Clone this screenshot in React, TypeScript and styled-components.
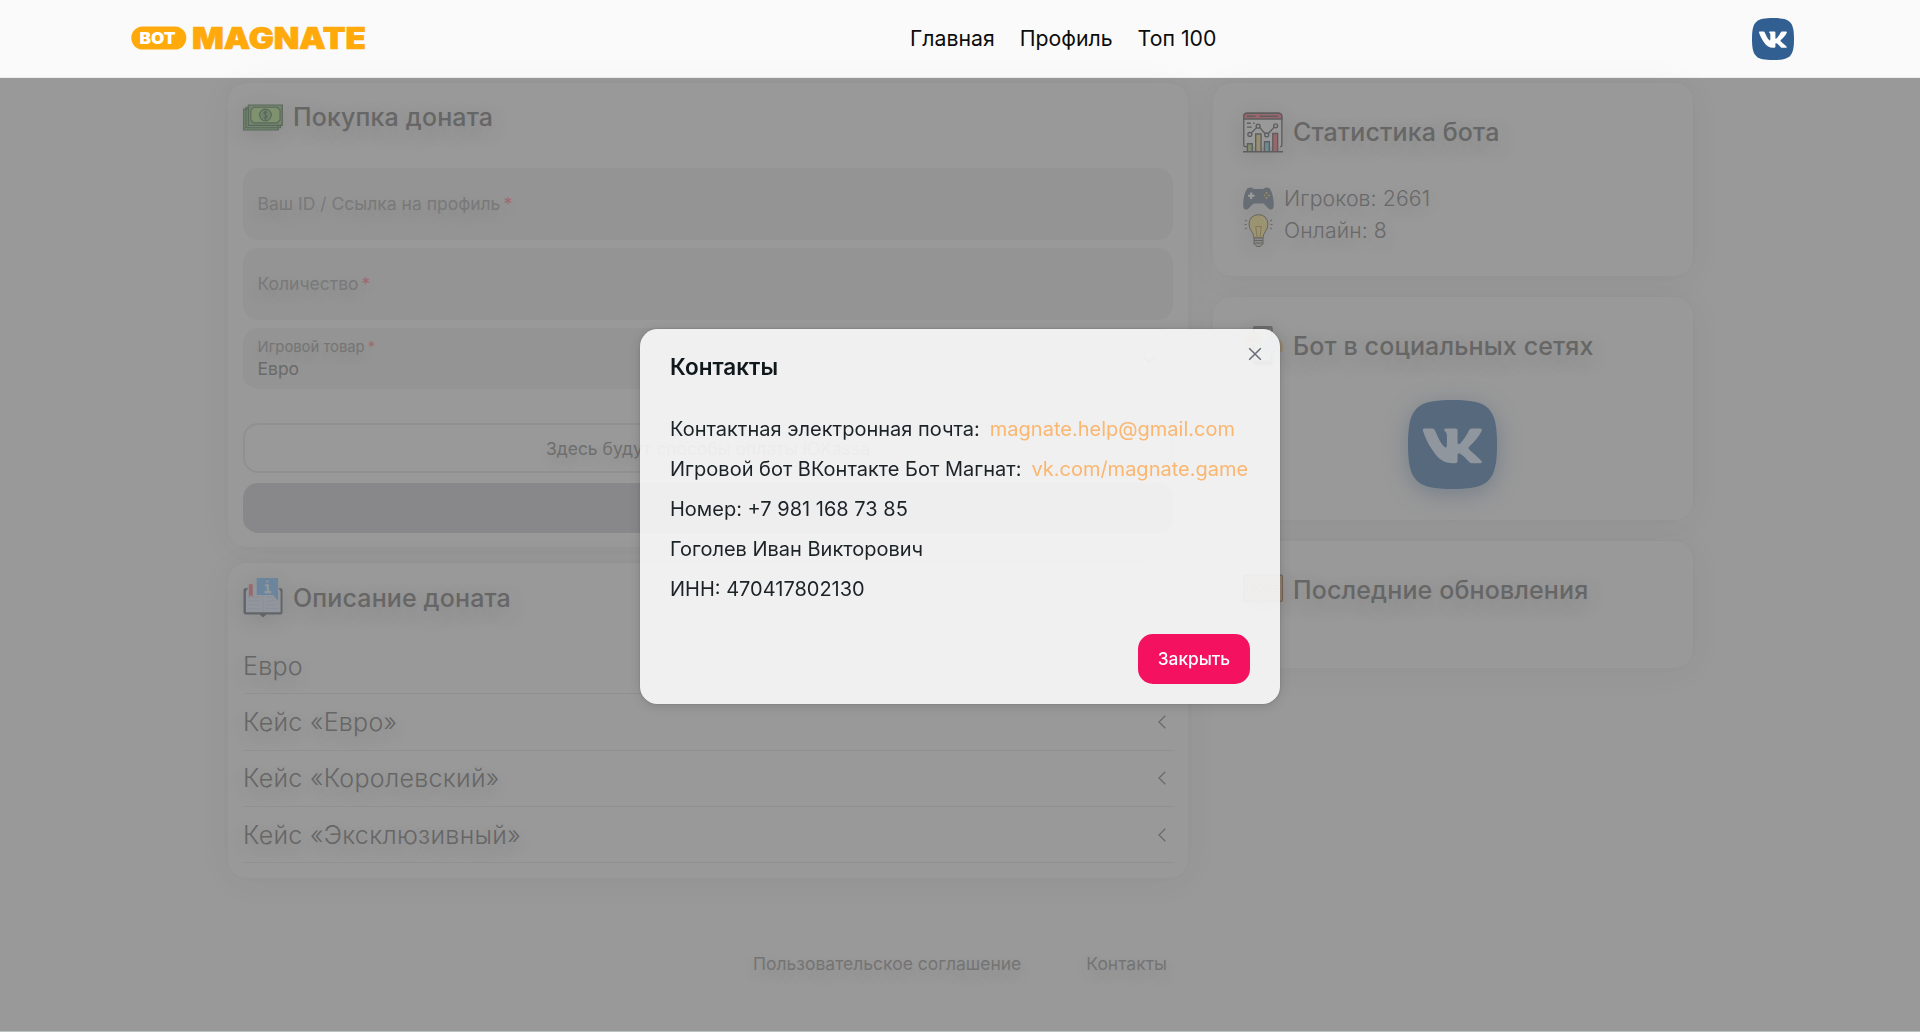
import React from "react";
import styled, { createGlobalStyle } from "styled-components";

const GlobalStyle = createGlobalStyle`
  *, *::before, *::after { box-sizing: border-box; }
  body {
    margin: 0;
    background: #999;
    font-family: Inter, "Noto Sans", sans-serif;
    overflow: hidden;
  }
  svg { display: block; flex: none; overflow: visible; }
`;

const Page = styled.div`
  display: flex;
  flex-direction: column;
  height: 1032px;
  background: #999;
  border-bottom: 1px solid #b9c3c4;
`;

const Header = styled.header`
  display: flex;
  align-items: center;
  flex: none;
  height: 78px;
  padding: 0 126px 0 131px;
  background: #fafafa;
  border-bottom: 1px solid #ececec;
`;

const Nav = styled.nav`
  display: flex;
  gap: 25px;
  margin: 0 auto 2px 538px;
`;

const NavLink = styled.a`
  color: #0c0c0c;
  font-size: 21.25px;
  font-weight: 400;
  line-height: 30px;
  white-space: nowrap;
`;

const Main = styled.main`
  display: flex;
  align-items: flex-start;
  gap: 25px;
  padding: 5px 0 0 228px;
`;

const Column = styled.div<{ $width: number; $gap: number }>`
  display: flex;
  flex-direction: column;
  gap: ${(p) => p.$gap}px;
  width: ${(p) => p.$width}px;
`;

const Card = styled.section<{ $pad: string }>`
  display: flex;
  flex-direction: column;
  padding: ${(p) => p.$pad};
  border-radius: 17.5px;
  background: #999;
  box-shadow: 0 0 19px rgba(0, 0, 0, 0.012), 0 3px 38px rgba(0, 0, 0, 0.04),
    0 0 1px rgba(0, 0, 0, 0.05);
`;

const CardTitle = styled.h2<{ $lift?: boolean }>`
  display: flex;
  align-items: center;
  gap: 10px;
  height: 39px;
  margin: 0 0 1px;
  padding-bottom: ${(p) => (p.$lift ? 1 : 0)}px;
  color: #666;
  font-size: 25px;
  font-weight: 500;
  letter-spacing: 0.13px;
  white-space: nowrap;
  text-shadow: 0 6px 25px rgba(0, 0, 0, 0.2);
`;

const Dim = styled.span`
  display: flex;
  justify-content: center;
  flex: none;
  opacity: 0.48;
  filter: brightness(0.64) drop-shadow(0 5px 12px rgba(0, 0, 0, 0.2));
`;

const Form = styled.div`
  display: flex;
  flex-direction: column;
  gap: 8px;
  margin-top: 30px;
`;

const Field = styled.div<{ $height: number }>`
  display: flex;
  align-items: center;
  justify-content: space-between;
  height: ${(p) => p.$height}px;
  padding: 0 17px 0 14.5px;
  border-radius: 15px;
  background: #949494;
`;

const FieldText = styled.div`
  display: flex;
  flex-direction: column;
`;

const Label = styled.label<{ $small?: boolean }>`
  color: ${(p) => (p.$small ? "#757575" : "#797979")};
  font-size: ${(p) => (p.$small ? 14.8 : 17.5)}px;
  line-height: ${(p) => (p.$small ? 20 : 24)}px;
  text-shadow: 0 6px 18px rgba(0, 0, 0, 0.12);
`;

const Star = styled.span`
  margin-left: 3px;
  color: #a2686f;
`;

const Value = styled.span`
  color: #6a6a6a;
  font-size: 17.5px;
  line-height: 24px;
`;

const PaymentHint = styled.div`
  display: flex;
  align-items: center;
  justify-content: center;
  height: 50px;
  margin-top: 34px;
  border: 2px solid #909090;
  border-radius: 15px;
  color: #6e6e6e;
  font-size: 17.5px;
  text-shadow: 0 6px 18px rgba(0, 0, 0, 0.12);
`;

const PayButton = styled.div`
  height: 50px;
  margin-top: 10px;
  border-radius: 15px;
  background: #88888a;
`;

const Accordion = styled.div`
  display: flex;
  flex-direction: column;
  margin-top: 20px;
`;

const AccordionRow = styled.div`
  display: flex;
  align-items: center;
  justify-content: space-between;
  height: 56.3px;
  padding-right: 7px;
  border-bottom: 1px solid #909090;
  color: #666;
  font-size: 25px;
  font-weight: 300;
  letter-spacing: 0.3px;
  text-shadow: 0 6px 20px rgba(0, 0, 0, 0.16);
`;

const Stats = styled.div`
  display: flex;
  flex-direction: column;
  margin-top: 29px;
`;

const StatRow = styled.div`
  display: flex;
  align-items: center;
  gap: 10px;
  height: 32px;
  color: #696969;
  font-size: 21.25px;
  font-weight: 300;
  letter-spacing: 0.1px;
  text-shadow: 0 6px 20px rgba(0, 0, 0, 0.16);
`;

const Social = styled.div`
  display: flex;
  justify-content: center;
  margin: 34px 1px 0 0;
  filter: drop-shadow(0 5px 12px rgba(50, 76, 110, 0.35));
`;

const Footer = styled.footer`
  display: flex;
  gap: 65px;
  padding: 74px 0 0 753px;
  color: #747474;
  font-size: 17.5px;
  line-height: 24px;
  white-space: nowrap;
  text-shadow: 0 6px 18px rgba(0, 0, 0, 0.14);
`;

const Overlay = styled.div`
  position: fixed;
  inset: 1px 0 0 0;
  display: flex;
  align-items: center;
  justify-content: center;
`;

const Dialog = styled.section`
  position: relative;
  display: flex;
  flex-direction: column;
  width: 640px;
  height: 375px;
  border-radius: 17.5px;
  background: rgba(249, 249, 249, 0.9);
  box-shadow: 0 0 6px rgba(0, 0, 0, 0.05), 0 2px 12px rgba(0, 0, 0, 0.13),
    0 0 1px rgba(0, 0, 0, 0.35);
`;

const DialogTitle = styled.h3`
  margin: 0;
  padding: 20px 30px;
  color: #11181c;
  font-size: 22.5px;
  font-weight: 600;
  line-height: 35px;
`;

const DialogBody = styled.div`
  display: flex;
  flex-direction: column;
  gap: 10px;
  padding: 10px 30px;
`;

const Line = styled.p`
  display: flex;
  gap: 10px;
  margin: 0;
  color: #1c2327;
  font-size: 20px;
  line-height: 30px;
  white-space: nowrap;
`;

const Mail = styled.a`
  color: #fbb66f;
`;

const DialogFooter = styled.div`
  display: flex;
  justify-content: flex-end;
  padding: 20px 30px;
`;

const CloseButton = styled.button`
  width: 112px;
  height: 50px;
  padding: 0 0 1px;
  border: 0;
  border-radius: 15px;
  background: #f41260;
  color: #fff;
  font-family: inherit;
  font-size: 17.3px;
  font-weight: 500;
`;

const CloseIcon = styled.button`
  position: absolute;
  top: 15px;
  right: 15px;
  display: grid;
  place-items: center;
  width: 20px;
  height: 20px;
  padding: 0;
  border: 0;
  background: none;
`;

const LogoBox = styled.div`
  display: flex;
  width: 241px;
  margin-bottom: 1px;
`;

const Logo = () => (
  <LogoBox>
    <svg width="241" height="30" viewBox="0 -3 241 30" fontFamily="Inter, sans-serif" fontWeight="900">
      <rect x="0.3" y="0.5" width="55" height="23" rx="11.5" fill="#ffa90a" />
      <text x="8.5" y="17.800" fontSize="15.5" fill="#fff" textLength="36" lengthAdjust="spacingAndGlyphs">BOT</text>
      <text x="61" y="22.5" fontSize="29.5" fill="#ffa90a" stroke="#ffa90a" strokeWidth="0.7" textLength="174" lengthAdjust="spacingAndGlyphs">MAGNATE</text>
    </svg>
  </LogoBox>
);

const VkIcon = ({ size, bg = "#315f92", fg = "#fff" }: { size: number; bg?: string; fg?: string }) => (
  <svg width={size} height={size} viewBox="0 0 100 100">
    <path d="M50 0C90 0 100 8 100 50S90 100 50 100 0 92 0 50 10 0 50 0Z" fill={bg} />
    <path d="M18 32H27.500Q29.500 32 30.500 34.500C34 43 38 51 42 53.500Q43.700 54 43.700 49V40Q43.700 36 41 34.500Q40 32 42.500 32H53.500Q55.700 32 55.700 34.500V48Q56 51 59 48.500C63 44 66.500 38.500 68.500 34Q69.500 32 71.500 32H81Q84 32 82.500 35.500C79.500 41.500 74 47.500 68.500 52.500Q67 54 69 56C74 60.500 79 64.500 82.500 68.500Q84 71 81 71H71.500Q70 71 68.500 69.500C65.500 66 61.500 61.500 58 60Q55.700 59.500 55.700 62V68.500Q55.700 71 53 71C42 72 34 66.500 28 57C23 50 19 42 16.800 34.500Q16 32 18 32Z" fill={fg} />
  </svg>
);

const MoneyIcon = () => (
  <svg width="40" height="27" viewBox="0 0 41 27" fill="#6fb060" stroke="#24522d" strokeWidth="1.2">
    <path d="M.7 5H36V26.300H.7ZM3 3H38.500V24H3Z" />
    <path d="M5.500.7H40.300V21.500H5.500Z" />
    <path d="M11 3H35L38 6V16L35 19H11L8 16V6Z" fill="#9bd665" />
    <circle cx="23" cy="11" r="6" />
    <path d="M25 8.500Q22 6.500 21.300 9.500L24.700 12Q24.500 15 21 13.500M23 6V16" fill="none" />
  </svg>
);

const BookIcon = () => (
  <svg width="40" height="41" viewBox="0 0 41 41">
    <path d="M2 11H39Q40.500 11 40.500 13V36Q40.500 38 38.500 38H24L20.500 41 17 38H3Q.5 38 .5 36V13Q.5 11 2 11Z" fill="#3c4856" />
    <path d="M3 14L8 8Q16 8 20.500 14 26 8 34 8L38.500 14V35.500H3Z" fill="#dbe8fb" />
    <path d="M20.500 14V35.500M5 20H17M5 24H17M5 28H17M5 32H17M24 20H34M24 24H34M24 28H34M24 32H36" stroke="#b9cfee" strokeWidth="1" />
    <path d="M6 7H10V20L8 18 6 20Z" fill="#f0535d" />
    <path d="M14 .5H36V24L31 18H14Z" fill="#5cb0fa" />
    <path d="M25 3V5M22.500 8H25.500V15M22 15H29" fill="none" stroke="#d6ebfc" strokeWidth="2.200" />
  </svg>
);

const ChartIcon = () => (
  <svg width="40" height="41" viewBox="0 0 41 41" fill="none" stroke="#302f35" strokeWidth="1.400">
    <path d="M4 35H3Q.8 35 .8 33V4Q.8.8 4 .8H36Q39.800.8 39.800 4V33Q39.800 35 38 35" fill="#f2f2f2" />
    <path d="M.8 6.700V4Q.8.8 4 .8H36Q39.800.8 39.800 4V6.700Z" fill="#ef5360" />
    <path d="M4 3.800H13M17 3.800H36M4 11H8M10.500 11H12M4 15H9" />
    <path d="M4.500 40V32H9.500V40" fill="#9cc763" />
    <path d="M13 40V22H18.500V40" fill="#ecd05f" />
    <path d="M22 40V30H27V40" fill="#58cbe4" />
    <path d="M30.500 40V21.500H35.500V40" fill="#ef4b5c" />
    <path d="M0 40.200H41M8.300 21L14 15.500M17.300 15.500L22.500 21.500M26 21.500L32 15" />
    <circle cx="7" cy="22.500" r="2" /><circle cx="15.500" cy="14" r="2" />
    <circle cx="24.300" cy="23" r="2" /><circle cx="33.500" cy="13.700" r="2" />
  </svg>
);

const GamepadIcon = () => (
  <svg width="31" height="23" viewBox="0 0 31 23">
    <path d="M5 1Q9-.5 11 2H20Q23-.5 26 1C29 3 31 12 30.800 19Q30 24 26 22L20.500 16.500H10.500L5 22Q.5 24 .2 19C0 12 2 3 5 1Z" fill="#4b6178" />
    <path d="M8.200 5.500V12M5 8.800H11.500" stroke="#fff" strokeWidth="2" />
    <path d="M23.500 5V7M23.500 10V12M21 8.500H22.500M25 8.500H27" stroke="#d9bd48" strokeWidth="1.700" />
  </svg>
);

const BulbIcon = () => (
  <svg width="31" height="33" viewBox="0 0 31 33" fill="none" stroke="#4b4634" strokeWidth="1">
    <path d="M11 24C11 18 6 16.500 6 10Q7 .7 15.500.7T25 10C25 16.500 20 18 20 24Z" fill="#fbe36d" />
    <path d="M11 24H20V30L17 32.500H14L11 30ZM11 26.500H20M11.500 29H19.500" fill="#c3c3ca" />
    <path d="M14 23L12.700 12.500H18.300L17 23" stroke="#b47d29" />
    <path d="M18.500 3.500Q22 5 22.500 9" stroke="#fffbe0" />
    <path d="M2 6L4 7M1.500 10.500H3.500M2 15L4 14M29 6L27 7M29.500 10.500H27.500M29 15L27 14" />
  </svg>
);

const SocialIcon = () => (
  <svg width="40" height="41" viewBox="0 0 41 41">
    <rect x="10" y="0.500" width="20.500" height="40" rx="2" fill="#5a5a64" />
    <rect x="12" y="4" width="16.500" height="32" fill="#d6e6f6" />
    <path d="M2 8H18V20H9L5 24V20H2Z" fill="#f5c67e" />
    <path d="M21 13H34Q39 14 40 21T35 29H21Z" fill="#b9d7ee" />
    <path d="M37 15Q41 21 38.500 27" stroke="#e2ad4e" strokeWidth="2.500" fill="none" />
    <path d="M7 12L10 16L14 12" stroke="#e06a6a" strokeWidth="2" fill="none" />
  </svg>
);

const UpdateIcon = () => (
  <svg width="40" height="31" viewBox="0 0 41 31">
    <rect x="0.700" y="0.700" width="39.600" height="27" rx="1.500" fill="#f5b67c" stroke="#744526" strokeWidth="1.400" />
    <text x="3" y="18" fontFamily="Inter, sans-serif" fontSize="9.500" fill="#86552f" textLength="35">UPDATE</text>
    <path d="M9 28H28V30.500H9Z" fill="#8fb6ae" />
  </svg>
);

const Chevron = ({ down }: { down?: boolean }) => (
  <svg width={down ? 14 : 8} height={down ? 8 : 14} viewBox={down ? "0 0 14 8" : "0 0 8 14"} fill="none" stroke="#6b6b6b" strokeWidth="1.300">
    <path d={down ? "M1 1L7 7L13 1" : "M7.300.7L1 7L7.300 13.300"} />
  </svg>
);

const cases = ["Евро", "Кейс «Евро»", "Кейс «Королевский»", "Кейс «Эксклюзивный»"];

export default function App() {
  return (
    <>
      <GlobalStyle />
      <Page>
        <Header>
          <Logo />
          <Nav>
            <NavLink>Главная</NavLink>
            <NavLink>Профиль</NavLink>
            <NavLink>Топ 100</NavLink>
          </Nav>
          <VkIcon size={42} />
        </Header>
        <Main>
          <Column $width={960} $gap={16}>
            <Card $pad="15px 15px 14px">
              <CardTitle $lift><Dim><MoneyIcon /></Dim>Покупка доната</CardTitle>
              <Form>
                <Field $height={72}><Label>Ваш ID / Ссылка на профиль<Star>*</Star></Label></Field>
                <Field $height={72}><Label>Количество<Star>*</Star></Label></Field>
                <Field $height={61}>
                  <FieldText>
                    <Label $small>Игровой товар<Star>*</Star></Label>
                    <Value>Евро</Value>
                  </FieldText>
                  <Chevron down />
                </Field>
              </Form>
              <PaymentHint>Здесь будут способы оплаты ЮKassa</PaymentHint>
              <PayButton />
            </Card>
            <Card $pad="15px">
              <CardTitle><Dim><BookIcon /></Dim>Описание доната</CardTitle>
              <Accordion>
                {cases.map((name) => (
                  <AccordionRow key={name}>{name}<Chevron /></AccordionRow>
                ))}
              </Accordion>
            </Card>
          </Column>
          <Column $width={480} $gap={21}>
            <Card $pad="30px">
              <CardTitle $lift><Dim><ChartIcon /></Dim>Статистика бота</CardTitle>
              <Stats>
                <StatRow><Dim><GamepadIcon /></Dim>Игроков: 2661</StatRow>
                <StatRow><Dim><BulbIcon /></Dim>Онлайн: 8</StatRow>
              </Stats>
            </Card>
            <Card $pad="29px 30px 31px">
              <CardTitle><Dim><SocialIcon /></Dim>Бот в социальных сетях</CardTitle>
              <Social><VkIcon size={89} bg="#56697d" fg="#8f969e" /></Social>
            </Card>
            <Card $pad="29px 30px 58px">
              <CardTitle><Dim><UpdateIcon /></Dim>Последние обновления</CardTitle>
            </Card>
          </Column>
        </Main>
        <Footer>
          <span>Пользовательское соглашение</span>
          <span>Контакты</span>
        </Footer>
      </Page>
      <Overlay>
        <Dialog>
          <DialogTitle>Контакты</DialogTitle>
          <DialogBody>
            <Line>Контактная электронная почта: <Mail>magnate.help@gmail.com</Mail></Line>
            <Line>Игровой бот ВКонтакте Бот Магнат: <Mail>vk.com/magnate.game</Mail></Line>
            <Line>Номер: +7 981 168 73 85</Line>
            <Line>Гоголев Иван Викторович</Line>
            <Line>ИНН: 470417802130</Line>
          </DialogBody>
          <DialogFooter><CloseButton>Закрыть</CloseButton></DialogFooter>
          <CloseIcon aria-label="Закрыть">
            <svg width="14" height="14" viewBox="0 0 14 14" stroke="#6b6b76" strokeWidth="1.500">
              <path d="M1.200 1.200L12.800 12.800M12.800 1.200L1.200 12.800" />
            </svg>
          </CloseIcon>
        </Dialog>
      </Overlay>
    </>
  );
}
